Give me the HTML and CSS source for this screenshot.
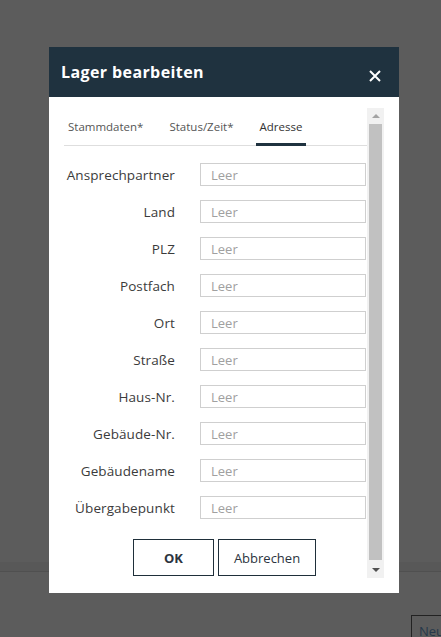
FILE: index.html
```html
<!DOCTYPE html>
<html>
<head lang="de">
    <meta charset="UTF-8">
    <title>Lager bearbeiten</title>
    <link rel="stylesheet" href="styles.css">
</head>
<body>
<div class="page">
    <div class="page-band"></div>
    <div class="page-foot">
        <span class="page-btn">Neu</span>
    </div>
</div>

<div class="dialog">
    <div class="dialog-head">
        <h1>Lager bearbeiten</h1>
        <svg class="close" width="12" height="12" viewBox="0 0 12 12">
            <path d="M1 1 L11 11 M11 1 L1 11" stroke="#fff" stroke-width="2" fill="none"/>
        </svg>
    </div>
    <div class="dialog-body">
        <div class="scroll">
            <ul class="tabs">
                <li>Stammdaten*</li>
                <li>Status/Zeit*</li>
                <li class="active">Adresse</li>
            </ul>
            <div class="form">
                <div class="row"><label>Ansprechpartner</label><input type="text" placeholder="Leer"></div>
                <div class="row"><label>Land</label><input type="text" placeholder="Leer"></div>
                <div class="row"><label>PLZ</label><input type="text" placeholder="Leer"></div>
                <div class="row"><label>Postfach</label><input type="text" placeholder="Leer"></div>
                <div class="row"><label>Ort</label><input type="text" placeholder="Leer"></div>
                <div class="row"><label>Straße</label><input type="text" placeholder="Leer"></div>
                <div class="row"><label>Haus-Nr.</label><input type="text" placeholder="Leer"></div>
                <div class="row"><label>Gebäude-Nr.</label><input type="text" placeholder="Leer"></div>
                <div class="row"><label>Gebäudename</label><input type="text" placeholder="Leer"></div>
                <div class="row"><label>Übergabepunkt</label><input type="text" placeholder="Leer"></div>
            </div>
            <div class="buttons">
                <button class="btn btn-ok">OK</button>
                <button class="btn">Abbrechen</button>
            </div>
        </div>
        <div class="scrollbar">
            <div class="arrow arrow-up"></div>
            <div class="thumb"></div>
            <div class="arrow arrow-down"></div>
        </div>
    </div>
</div>
</body>
</html>
```

FILE: styles.css
```css
* {
    padding: 0;
    margin: 0;
    list-style: none;
    box-sizing: border-box;
}

body {
    width: 441px;
    height: 637px;
    overflow: hidden;
    background: #5c5c5c;
    font-family: "Open Sans", "Liberation Sans", sans-serif;
    position: relative;
}

/* seite hinter dem overlay */
.page {
    height: 637px;
    overflow: hidden;
}

.page-band {
    margin-top: 562px;
    height: 10px;
    background: #585858;
    border-bottom: 1px solid #505050;
}

.page-foot {
    padding-top: 43px;
    padding-left: 411px;
    height: 65px;
    overflow: hidden;
}

.page-btn {
    display: block;
    width: 60px;
    height: 30px;
    border: 1px solid #222;
    color: #26384a;
    font-size: 13px;
    line-height: 13px;
    padding: 9px 0 0 7px;
}

/* dialog */
.dialog {
    position: absolute;
    left: 49px;
    top: 47px;
    width: 350px;
    height: 546px;
    background: #fff;
}

.dialog-head {
    height: 50px;
    background: #1f323f;
    display: flex;
    align-items: center;
    justify-content: space-between;
    padding: 0 18px 0 12px;
}

.dialog-head h1 {
    color: #fff;
    font-size: 16px;
    font-weight: bold;
    letter-spacing: 0.4px;
}

.close {
    margin-top: 7px;
}

.dialog-body {
    display: flex;
    height: 496px;
    padding: 11px 15px 14px 15px;
}

.scroll {
    flex: 1;
    height: 470px;
    overflow: hidden;
}

.tabs {
    display: flex;
    gap: 18px;
    padding-top: 10px;
    border-bottom: 1px solid #dedede;
    font-size: 11.5px;
    line-height: 18px;
    color: #555;
}

.tabs li {
    padding: 0 4px 8px 4px;
    border-bottom: 2px solid transparent;
    margin-bottom: -1px;
}

.tabs li.active {
    color: #333;
    border-bottom: 3px solid #1f323f;
    padding-bottom: 7px;
}

.form {
    padding-top: 17px;
    display: flex;
    flex-direction: column;
    gap: 14px;
}

.row {
    display: flex;
    align-items: center;
    height: 23px;
}

.row label {
    width: 111px;
    text-align: right;
    font-size: 13.5px;
    letter-spacing: 0.1px;
    color: #3b3b3b;
    margin-right: 25px;
}

.row input {
    width: 166px;
    height: 23px;
    border: 1px solid #cfcfcf;
    padding-left: 10px;
    font-family: inherit;
    font-size: 13px;
    outline: none;
}

.row input::placeholder {
    color: #a0a0a0;
}

.buttons {
    display: flex;
    justify-content: center;
    gap: 4px;
    padding-top: 20px;
    padding-left: 18px;
}

.btn {
    height: 37px;
    padding: 0 15px;
    background: #fff;
    border: 1px solid #1f2f3a;
    font-family: inherit;
    font-size: 13px;
    color: #2c3440;
}

.btn-ok {
    width: 81px;
    font-weight: bold;
}

/* scrollbar nachgebaut */
.scrollbar {
    width: 17px;
    height: 470px;
    background: #f1f1f1;
    display: flex;
    flex-direction: column;
    align-items: center;
}

.arrow {
    width: 17px;
    height: 16px;
    display: flex;
    justify-content: center;
    align-items: center;
}

.arrow-up::after,
.arrow-down::after {
    content: "";
    border-left: 4px solid transparent;
    border-right: 4px solid transparent;
}

.arrow-up::after {
    border-bottom: 4px solid #a3a3a3;
}

.arrow-down::after {
    border-top: 4px solid #505050;
}

.thumb {
    width: 13px;
    flex: 1;
    margin-bottom: 2px;
    background: #c1c1c1;
}
```
